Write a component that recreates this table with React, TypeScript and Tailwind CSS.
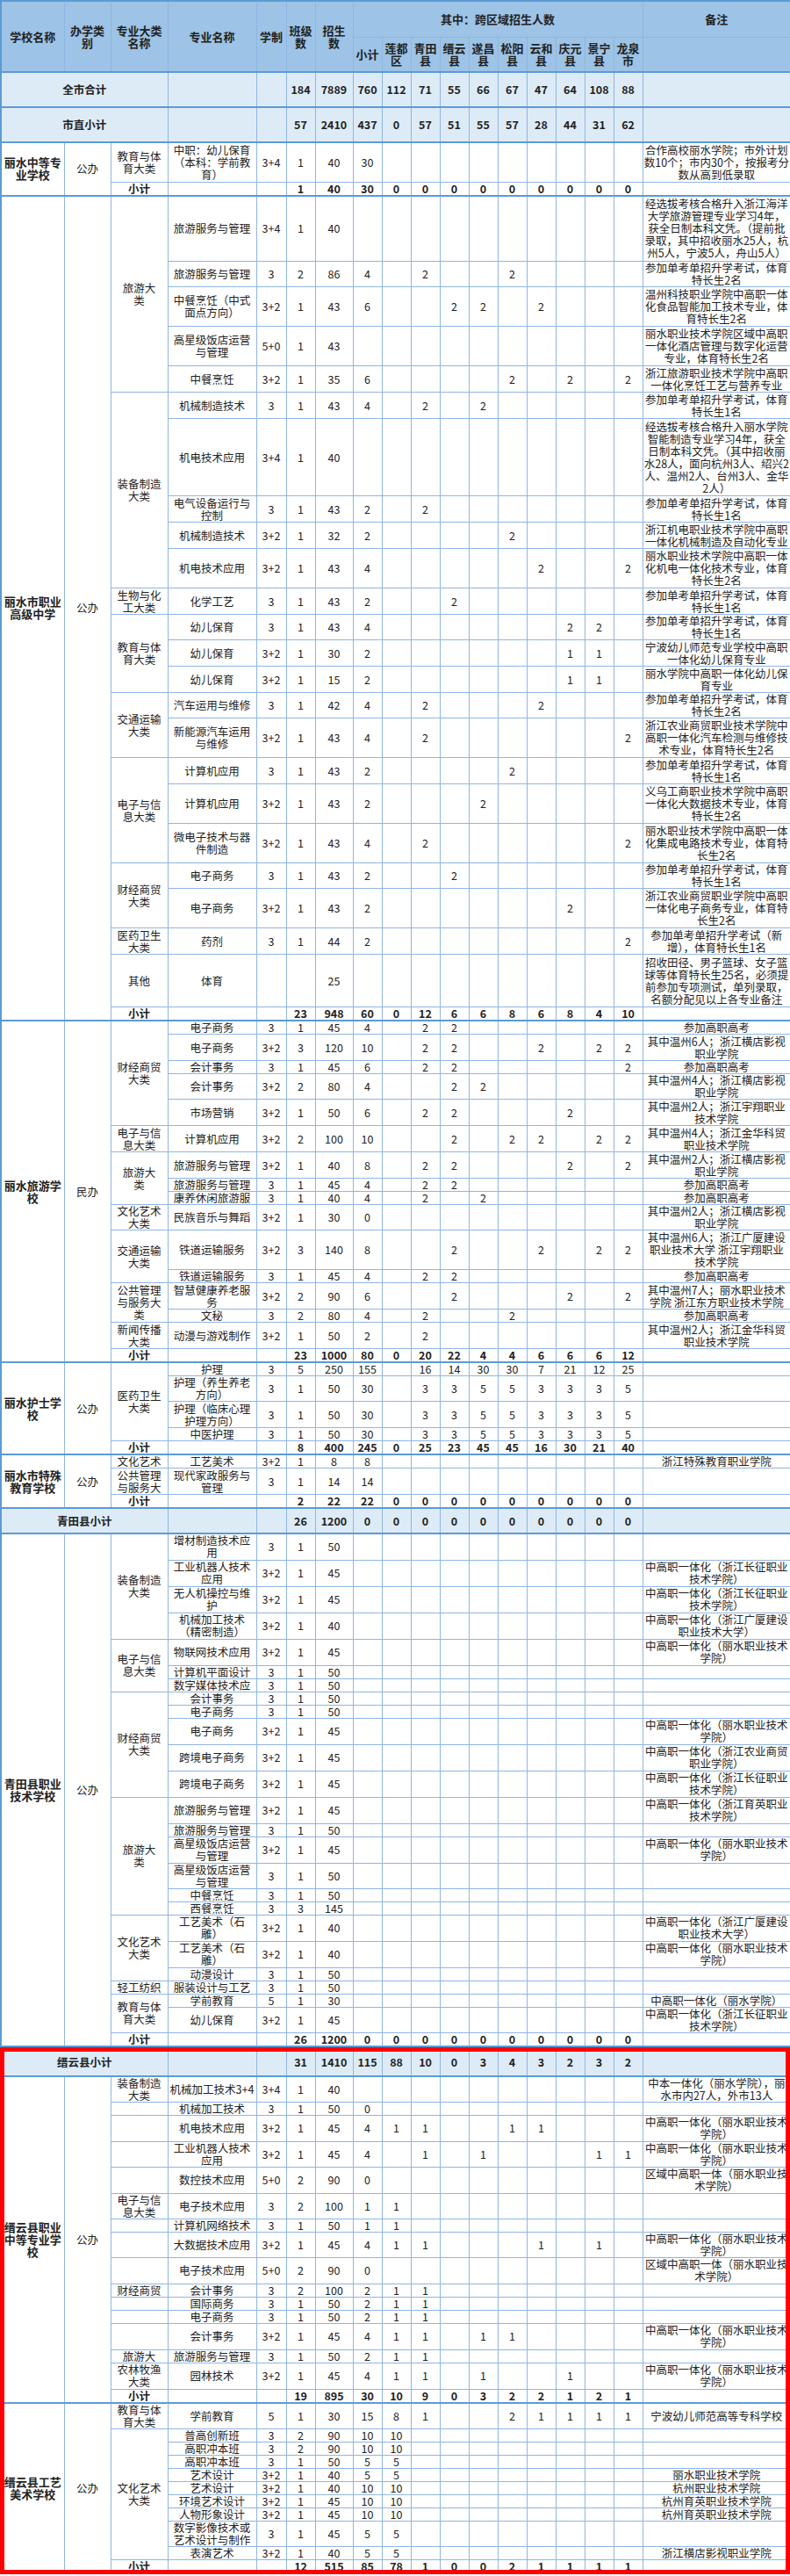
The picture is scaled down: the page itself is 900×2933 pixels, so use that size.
import React from "react";

type Row = [string | null, string, string, string, string, string, string, number];
interface Blk {
  name: string;
  type: string;
  rows: Row[];
  sub: [string, string, string];
}

const H: Record<number, string> = {
  1: "h-[15px]",
  2: "h-[30px]",
  3: "h-[45px]",
  4: "h-[60px]",
  5: "h-[75px]",
  6: "h-[89px]",
  29: "h-[29px]",
  88: "h-[88px]",
};

const cell = "border border-[#8fb5e3] p-0 text-center align-middle whitespace-nowrap";
const TOP = "[&>td]:border-t-2 [&>td]:border-t-[#5b9bd5]";

const pad = (v: string) => {
  const f = v.split(",");
  while (f.length < 10) f.push("");
  return f.slice(0, 10);
};

function L({ t }: { t: string }) {
  const parts = t.split("|");
  return (
    <>
      {parts.map((p, i) => (
        <React.Fragment key={i}>
          {i > 0 && <br />}
          {p}
        </React.Fragment>
      ))}
    </>
  );
}

function Cols() {
  return (
    <colgroup>
      <col className="w-[72px]" />
      <col className="w-[53px]" />
      <col className="w-[65px]" />
      <col className="w-[101px]" />
      <col className="w-[34px]" />
      <col className="w-[33px]" />
      <col className="w-[43px]" />
      <col className="w-[33px]" />
      <col className="w-[33px]" />
      <col className="w-[33px]" />
      <col className="w-[33px]" />
      <col className="w-[33px]" />
      <col className="w-[33px]" />
      <col className="w-[33px]" />
      <col className="w-[33px]" />
      <col className="w-[33px]" />
      <col className="w-[33px]" />
      <col className="w-[169px]" />
    </colgroup>
  );
}

function TotalRow({
  label,
  bj,
  zs,
  vals,
  h,
}: {
  label: string;
  bj: string;
  zs: string;
  vals: string;
  h: string;
}) {
  return (
    <tr className={`${h} bg-[#ddebf7] font-bold ${TOP}`}>
      <td colSpan={3} className={cell}>
        {label}
      </td>
      <td className={cell}></td>
      <td className={cell}></td>
      <td className={cell}>{bj}</td>
      <td className={cell}>{zs}</td>
      {pad(vals).map((v, i) => (
        <td key={i} className={cell}>
          {v}
        </td>
      ))}
      <td className={cell}></td>
    </tr>
  );
}

function Block({ b }: { b: Blk }) {
  const total = b.rows.length + 1;
  return (
    <>
      {b.rows.map((r, i) => {
        const [cat, major, xz, bj, zs, vals, note, h] = r;
        let catCell: React.ReactNode = null;
        if (cat !== null) {
          const [t, s] = cat.split("#");
          catCell = (
            <td rowSpan={s ? Number(s) : 1} className={cell}>
              <L t={t} />
            </td>
          );
        }
        return (
          <tr key={i} className={`${H[h]} ${i === 0 ? TOP : ""}`}>
            {i === 0 && (
              <>
                <td rowSpan={total} className={`${cell} font-bold text-[13px]`}>
                  <L t={b.name} />
                </td>
                <td rowSpan={total} className={cell}>
                  {b.type}
                </td>
              </>
            )}
            {catCell}
            <td className={cell}>
              <L t={major} />
            </td>
            <td className={cell}>{xz}</td>
            <td className={cell}>{bj}</td>
            <td className={cell}>{zs}</td>
            {pad(vals).map((v, k) => (
              <td key={k} className={cell}>
                {v}
              </td>
            ))}
            <td className={cell}>
              <L t={note} />
            </td>
          </tr>
        );
      })}
      <tr className="h-[15px] font-bold">
        <td className={cell}>小计</td>
        <td className={cell}></td>
        <td className={cell}></td>
        <td className={cell}>{b.sub[0]}</td>
        <td className={cell}>{b.sub[1]}</td>
        {pad(b.sub[2]).map((v, k) => (
          <td key={k} className={cell}>
            {v}
          </td>
        ))}
        <td className={cell}></td>
      </tr>
    </>
  );
}

const TY = "参加单考单招升学考试，体育";

const upperBlocks: Blk[] = [
  {
    name: "丽水中等专|业学校",
    type: "公办",
    rows: [
      [
        "教育与体|育大类",
        "中职：幼儿保育|（本科：学前教|育）",
        "3+4",
        "1",
        "40",
        "30",
        "合作高校丽水学院；市外计划|数10个；市内30个，按报考分|数从高到低录取",
        3,
      ],
    ],
    sub: ["1", "40", "30,0,0,0,0,0,0,0,0,0"],
  },
  {
    name: "丽水市职业|高级中学",
    type: "公办",
    rows: [
      [
        "旅游大|类#5",
        "旅游服务与管理",
        "3+4",
        "1",
        "40",
        "",
        "经选拔考核合格升入浙江海洋|大学旅游管理专业学习4年，|获全日制本科文凭。（提前批|录取，其中招收丽水25人，杭|州5人，宁波5人，舟山5人）",
        5,
      ],
      [null, "旅游服务与管理", "3", "2", "86", "4,,2,,,2", TY + "|特长生2名", 29],
      [
        null,
        "中餐烹饪（中式|面点方向）",
        "3+2",
        "1",
        "43",
        "6,,,2,2,,2",
        "温州科技职业学院中高职一体|化食品智能加工技术专业，体|育特长生2名",
        3,
      ],
      [
        null,
        "高星级饭店运营|与管理",
        "5+0",
        "1",
        "43",
        "",
        "丽水职业技术学院区域中高职|一体化酒店管理与数字化运营|专业，体育特长生2名",
        3,
      ],
      [
        null,
        "中餐烹饪",
        "3+2",
        "1",
        "35",
        "6,,,,,2,,2,,2",
        "浙江旅游职业技术学院中高职|一体化烹饪工艺与营养专业",
        2,
      ],
      ["装备制造|大类#5", "机械制造技术", "3", "1", "43", "4,,2,,2", TY + "|特长生1名", 2],
      [
        null,
        "机电技术应用",
        "3+4",
        "1",
        "40",
        "",
        "经选拔考核合格升入丽水学院|智能制造专业学习4年，获全|日制本科文凭。（其中招收丽|水28人，面向杭州3人、绍兴2|人、温州2人、台州3人、金华|2人）",
        88,
      ],
      [null, "电气设备运行与|控制", "3", "1", "43", "2,,2", TY + "|特长生1名", 2],
      [
        null,
        "机械制造技术",
        "3+2",
        "1",
        "32",
        "2,,,,,2",
        "浙江机电职业技术学院中高职|一体化机械制造及自动化专业",
        2,
      ],
      [
        null,
        "机电技术应用",
        "3+2",
        "1",
        "43",
        "4,,,,,,2,,,2",
        "丽水职业技术学院中高职一体|化机电一体化技术专业，体育|特长生2名",
        3,
      ],
      ["生物与化|工大类", "化学工艺", "3", "1", "43", "2,,,2", TY + "|特长生1名", 2],
      ["教育与体|育大类#3", "幼儿保育", "3", "1", "43", "4,,,,,,,2,2", TY + "|特长生1名", 29],
      [
        null,
        "幼儿保育",
        "3+2",
        "1",
        "30",
        "2,,,,,,,1,1",
        "宁波幼儿师范专业学校中高职|一体化幼儿保育专业",
        2,
      ],
      [
        null,
        "幼儿保育",
        "3+2",
        "1",
        "15",
        "2,,,,,,,1,1",
        "丽水学院中高职一体化幼儿保|育专业",
        2,
      ],
      ["交通运输|大类#2", "汽车运用与维修", "3", "1", "42", "4,,2,,,,2", TY + "|特长生2名", 29],
      [
        null,
        "新能源汽车运用|与维修",
        "3+2",
        "1",
        "43",
        "4,,2,,,,,,,2",
        "浙江农业商贸职业技术学院中|高职一体化汽车检测与维修技|术专业，体育特长生2名",
        3,
      ],
      ["电子与信|息大类#3", "计算机应用", "3", "1", "43", "2,,,,,2", TY + "|特长生1名", 2],
      [
        null,
        "计算机应用",
        "3+2",
        "1",
        "43",
        "2,,,,2",
        "义乌工商职业技术学院中高职|一体化大数据技术专业，体育|特长生2名",
        3,
      ],
      [
        null,
        "微电子技术与器|件制造",
        "3+2",
        "1",
        "43",
        "4,,2,,,,,,,2",
        "丽水职业技术学院中高职一体|化集成电路技术专业，体育特|长生2名",
        3,
      ],
      ["财经商贸|大类#2", "电子商务", "3", "1", "43", "2,,,2", TY + "|特长生1名", 29],
      [
        null,
        "电子商务",
        "3+2",
        "1",
        "43",
        "2,,,,,,,2",
        "浙江农业商贸职业学院中高职|一体化电子商务专业，体育特|长生2名",
        3,
      ],
      [
        "医药卫生|大类",
        "药剂",
        "3",
        "1",
        "44",
        "2,,,,,,,,,2",
        "参加单考单招升学考试（新|增），体育特长生1名",
        2,
      ],
      [
        "其他",
        "体育",
        "",
        "",
        "25",
        "",
        "招收田径、男子篮球、女子篮|球等体育特长生25名，必须提|前参加专项测试，单列录取，|名额分配见以上各专业备注",
        4,
      ],
    ],
    sub: ["23", "948", "60,0,12,6,6,8,6,8,4,10"],
  },
  {
    name: "丽水旅游学|校",
    type: "民办",
    rows: [
      ["财经商贸|大类#5", "电子商务", "3", "1", "45", "4,,2,2", "参加高职高考", 1],
      [
        null,
        "电子商务",
        "3+2",
        "3",
        "120",
        "10,,2,2,,,2,,2,2",
        "其中温州6人；浙江横店影视|职业学院",
        2,
      ],
      [null, "会计事务", "3", "1", "45", "6,,2,2,,,,,,2", "参加高职高考", 1],
      [
        null,
        "会计事务",
        "3+2",
        "2",
        "80",
        "4,,,2,2",
        "其中温州4人；浙江横店影视|职业学院",
        29,
      ],
      [
        null,
        "市场营销",
        "3+2",
        "1",
        "50",
        "6,,2,2,,,,2",
        "其中温州2人；浙江宇翔职业|技术学院",
        2,
      ],
      [
        "电子与信|息大类",
        "计算机应用",
        "3+2",
        "2",
        "100",
        "10,,,2,,2,2,,2,2",
        "其中温州4人；浙江金华科贸|职业技术学院",
        2,
      ],
      [
        "旅游大|类#3",
        "旅游服务与管理",
        "3+2",
        "1",
        "40",
        "8,,2,2,,,,2,,2",
        "其中温州2人；浙江横店影视|职业学院",
        2,
      ],
      [null, "旅游服务与管理", "3", "1", "45", "4,,2,2", "参加高职高考", 1],
      [null, "康养休闲旅游服", "3", "1", "40", "4,,2,,2", "参加高职高考", 1],
      [
        "文化艺术|大类",
        "民族音乐与舞蹈",
        "3+2",
        "1",
        "30",
        "0",
        "其中温州2人；浙江横店影视|职业学院",
        29,
      ],
      [
        "交通运输|大类#2",
        "铁道运输服务",
        "3+2",
        "3",
        "140",
        "8,,,2,,,2,,2,2",
        "其中温州6人；浙江广厦建设|职业技术大学 浙江宇翔职业|技术学院",
        3,
      ],
      [null, "铁道运输服务", "3", "1", "45", "4,,2,2", "参加高职高考", 1],
      [
        "公共管理|与服务大|类#2",
        "智慧健康养老服|务",
        "3+2",
        "2",
        "90",
        "6,,,2,,,,2,,2",
        "其中温州7人；丽水职业技术|学院 浙江东方职业技术学院",
        2,
      ],
      [null, "文秘", "3", "2", "80", "4,,2,,,2", "参加高职高考", 1],
      [
        "新闻传播|大类",
        "动漫与游戏制作",
        "3+2",
        "1",
        "50",
        "2,,2",
        "其中温州2人；浙江金华科贸|职业技术学院",
        2,
      ],
    ],
    sub: ["23", "1000", "80,0,20,22,4,4,6,6,6,12"],
  },
  {
    name: "丽水护士学|校",
    type: "公办",
    rows: [
      ["医药卫生|大类#4", "护理", "3", "5", "250", "155,,16,14,30,30,7,21,12,25", "", 1],
      [null, "护理（养生养老|方向）", "3", "1", "50", "30,,3,3,5,5,3,3,3,5", "", 29],
      [null, "护理（临床心理|护理方向）", "3", "1", "50", "30,,3,3,5,5,3,3,3,5", "", 2],
      [null, "中医护理", "3", "1", "50", "30,,3,3,5,5,3,3,3,5", "", 1],
    ],
    sub: ["8", "400", "245,0,25,23,45,45,16,30,21,40"],
  },
  {
    name: "丽水市特殊|教育学校",
    type: "公办",
    rows: [
      ["文化艺术", "工艺美术", "3+2", "1", "8", "8", "浙江特殊教育职业学院", 1],
      ["公共管理|与服务大", "现代家政服务与|管理", "3", "1", "14", "14", "", 2],
    ],
    sub: ["2", "22", "22,0,0,0,0,0,0,0,0,0"],
  },
];

const ZG = (s: string) => "中高职一体化（" + s;

const qingtian: Blk = {
  name: "青田县职业|技术学校",
  type: "公办",
  rows: [
    ["装备制造|大类#4", "增材制造技术应|用", "3", "1", "50", "", "", 2],
    [null, "工业机器人技术|应用", "3+2", "1", "45", "", ZG("浙江长征职业|技术学院）"), 2],
    [null, "无人机操控与维|护", "3+2", "1", "45", "", ZG("浙江长征职业|技术学院）"), 2],
    [null, "机械加工技术|（精密制造）", "3+2", "1", "40", "", ZG("浙江广厦建设|职业技术大学）"), 2],
    ["电子与信|息大类#3", "物联网技术应用", "3+2", "1", "45", "", ZG("丽水职业技术|学院）"), 2],
    [null, "计算机平面设计", "3", "1", "50", "", "", 1],
    [null, "数字媒体技术应", "3", "1", "50", "", "", 1],
    ["财经商贸|大类#5", "会计事务", "3", "1", "50", "", "", 1],
    [null, "电子商务", "3", "1", "50", "", "", 1],
    [null, "电子商务", "3+2", "1", "45", "", ZG("丽水职业技术|学院）"), 2],
    [null, "跨境电子商务", "3+2", "1", "45", "", ZG("浙江农业商贸|职业学院）"), 2],
    [null, "跨境电子商务", "3+2", "1", "45", "", ZG("浙江长征职业|技术学院）"), 2],
    ["旅游大|类#6", "旅游服务与管理", "3+2", "1", "45", "", ZG("浙江育英职业|技术学院）"), 2],
    [null, "旅游服务与管理", "3", "1", "50", "", "", 1],
    [null, "高星级饭店运营|与管理", "3+2", "1", "45", "", ZG("丽水职业技术|学院）"), 2],
    [null, "高星级饭店运营|与管理", "3", "1", "50", "", "", 29],
    [null, "中餐烹饪", "3", "1", "50", "", "", 1],
    [null, "西餐烹饪", "3", "3", "145", "", "", 1],
    ["文化艺术|大类#3", "工艺美术（石|雕）", "3+2", "1", "40", "", ZG("浙江广厦建设|职业技术大学）"), 2],
    [null, "工艺美术（石|雕）", "3+2", "1", "40", "", ZG("丽水职业技术|学院）"), 2],
    [null, "动漫设计", "3", "1", "50", "", "", 1],
    ["轻工纺织", "服装设计与工艺", "3", "1", "50", "", "", 1],
    ["教育与体|育大类#2", "学前教育", "5", "1", "30", "", "中高职一体化（丽水学院）", 1],
    [null, "幼儿保育", "3+2", "1", "45", "", ZG("浙江长征职业|技术学院）"), 29],
  ],
  sub: ["26", "1200", "0,0,0,0,0,0,0,0,0,0"],
};

const LSZ = ZG("丽水职业技术|学院）");

const jinyunBlocks: Blk[] = [
  {
    name: "缙云县职业|中等专业学|校",
    type: "公办",
    rows: [
      [
        "装备制造|大类",
        "机械加工技术3+4",
        "3+4",
        "1",
        "40",
        "",
        "中本一体化（丽水学院），丽|水市内27人，外市13人",
        29,
      ],
      ["", "机械加工技术", "3", "1", "50", "0", "", 1],
      ["", "机电技术应用", "3+2", "1", "45", "4,1,1,,,1,1", LSZ, 2],
      ["", "工业机器人技术|应用", "3+2", "1", "45", "4,,1,,1,,,,1,1", LSZ, 29],
      ["", "数控技术应用", "5+0", "2", "90", "0", "区域中高职一体（丽水职业技|术学院）", 2],
      ["电子与信|息大类", "电子技术应用", "3", "2", "100", "1,1", "", 29],
      ["", "计算机网络技术", "3", "1", "50", "1,1", "", 1],
      ["", "大数据技术应用", "3+2", "1", "45", "4,1,1,,,,1,,1", LSZ, 29],
      ["", "电子技术应用", "5+0", "2", "90", "0", "区域中高职一体（丽水职业技|术学院）", 2],
      ["财经商贸", "会计事务", "3", "2", "100", "2,1,1", "", 1],
      ["", "国际商务", "3", "1", "50", "2,1,1", "", 1],
      ["", "电子商务", "3", "1", "50", "2,1,1", "", 1],
      ["", "会计事务", "3+2", "1", "45", "4,1,1,,1,1", LSZ, 2],
      ["旅游大", "旅游服务与管理", "3", "1", "50", "2,1,1", "", 1],
      ["农林牧渔|大类", "园林技术", "3+2", "1", "45", "4,1,1,,1,,,1", LSZ, 2],
    ],
    sub: ["19", "895", "30,10,9,0,3,2,2,1,2,1"],
  },
  {
    name: "缙云县工艺|美术学校",
    type: "公办",
    rows: [
      [
        "教育与体|育大类",
        "学前教育",
        "5",
        "1",
        "30",
        "15,8,1,,,2,1,1,1,1",
        "宁波幼儿师范高等专科学校",
        29,
      ],
      ["文化艺术|大类#9", "普高创新班", "3", "2", "90", "10,10", "", 1],
      [null, "高职冲本班", "3", "2", "90", "10,10", "", 1],
      [null, "高职冲本班", "3", "1", "50", "5,5", "", 1],
      [null, "艺术设计", "3+2", "1", "40", "5,5", "丽水职业技术学院", 1],
      [null, "艺术设计", "3+2", "1", "40", "10,10", "杭州职业技术学院", 1],
      [null, "环境艺术设计", "3+2", "1", "45", "10,10", "杭州育英职业技术学院", 1],
      [null, "人物形象设计", "3+2", "1", "45", "10,10", "杭州育英职业技术学院", 1],
      [null, "数字影像技术或|艺术设计与制作", "3", "1", "45", "5,5", "", 29],
      [null, "表演艺术", "3+2", "1", "40", "5,5", "浙江横店影视职业学院", 1],
    ],
    sub: ["12", "515", "85,78,1,0,0,2,1,1,1,1"],
  },
];

const tableCls =
  "table-fixed w-[900px] border-collapse border-2 border-[#5b9bd5] text-[12.5px] leading-[14px] text-[#222]";

function Header() {
  const regions = ["莲都|区", "青田|县", "缙云|县", "遂昌|县", "松阳|县", "云和|县", "庆元|县", "景宁|县", "龙泉|市"];
  const hc = `${cell} bg-[#9dc3e6] font-bold text-[13px]`;
  return (
    <thead>
      <tr className="h-[41px]">
        <th rowSpan={2} className={hc}>学校名称</th>
        <th rowSpan={2} className={hc}>
          <L t="办学类|别" />
        </th>
        <th rowSpan={2} className={hc}>
          <L t="专业大类|名称" />
        </th>
        <th rowSpan={2} className={hc}>专业名称</th>
        <th rowSpan={2} className={hc}>学制</th>
        <th rowSpan={2} className={hc}>
          <L t="班级|数" />
        </th>
        <th rowSpan={2} className={hc}>
          <L t="招生|数" />
        </th>
        <th colSpan={10} className={hc}>其中：跨区域招生人数</th>
        <th className={hc}>备注</th>
      </tr>
      <tr className="h-[40px]">
        <th className={hc}>小计</th>
        {regions.map((r) => (
          <th key={r} className={hc}>
            <L t={r} />
          </th>
        ))}
        <th className={hc}></th>
      </tr>
    </thead>
  );
}

export default function App() {
  return (
    <div className="w-[900px] bg-white font-['Noto_Sans_CJK_SC','Liberation_Sans',sans-serif]">
      <table className={tableCls}>
        <Cols />
        <Header />
        <tbody>
          <TotalRow label="全市合计" bj="184" zs="7889" vals="760,112,71,55,66,67,47,64,108,88" h="h-[40px]" />
          <TotalRow label="市直小计" bj="57" zs="2410" vals="437,0,57,51,55,57,28,44,31,62" h="h-[40px]" />
          {upperBlocks.map((b) => (
            <Block key={b.name} b={b} />
          ))}
          <TotalRow label="青田县小计" bj="26" zs="1200" vals="0,0,0,0,0,0,0,0,0,0" h="h-[29px]" />
          <Block b={qingtian} />
        </tbody>
      </table>
      <div className="relative">
        <table className={tableCls}>
          <Cols />
          <tbody>
            <TotalRow label="缙云县小计" bj="31" zs="1410" vals="115,88,10,0,3,4,3,2,3,2" h="h-[32px]" />
            {jinyunBlocks.map((b) => (
              <Block key={b.name} b={b} />
            ))}
          </tbody>
        </table>
        <div className="pointer-events-none absolute inset-0 border-[5px] border-[#ff0000]" />
      </div>
    </div>
  );
}
